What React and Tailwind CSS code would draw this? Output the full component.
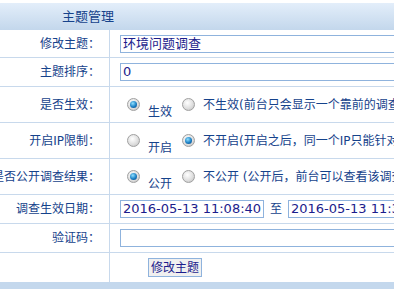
import React from "react";

const labelCls =
  "flex items-center justify-end pr-[9px] whitespace-nowrap text-[12px] text-[#15428b] border-r border-[#c8d9ec]";
const font = { fontFamily: '"DejaVu Sans","Noto Sans CJK SC",sans-serif' };

function Radio({ checked }) {
  return (
    <span className="w-[13px] h-[13px] shrink-0 rounded-full border border-[#a0a0a0] bg-[radial-gradient(circle_at_40%_35%,#ffffff,#dcdcdc_60%,#b8b8b8)] flex items-center justify-center">
      {checked && (
        <span className="w-[7px] h-[7px] rounded-full bg-[radial-gradient(circle_at_40%_35%,#8fe0ff,#1a7fc4_55%,#0a3f78)]" />
      )}
    </span>
  );
}

function RadioRow({ first, second, firstChecked }) {
  return (
    <div className="flex items-center pl-[17px] whitespace-nowrap text-[12px] text-[#15428b]">
      <Radio checked={firstChecked} />
      <span className="pt-[14px] ml-[8px]">{first}</span>
      <span className="ml-[10px] flex items-center">
        <Radio checked={!firstChecked} />
      </span>
      <span className="ml-[8px]">{second}</span>
    </div>
  );
}

function Input({ value, w }) {
  return (
    <div
      className={`h-[18px] border border-[#8fb3dd] bg-white flex items-center pl-[2px] text-[13px] text-[#1c1c8c] whitespace-nowrap overflow-hidden shrink-0 ${w}`}
    >
      {value}
    </div>
  );
}

export default function App() {
  return (
    <div className="w-[394px] h-[303px] bg-white overflow-hidden" style={font}>
      <div className="w-[560px] pt-[3px]">
        <div className="h-[27px] bg-[linear-gradient(to_bottom,#e3eefa,#c3d7ec)] flex items-center pl-[62px] text-[13px] text-[#15428b]">
          主题管理
        </div>
        <div className="grid grid-cols-[110px_1fr]">
          <div className={`${labelCls} h-[28px] border-b`}>修改主题：</div>
          <div className="h-[28px] border-b border-[#c8d9ec] flex items-center pl-[10px]">
            <Input value="环境问题调查" w="w-[440px]" />
          </div>

          <div className={`${labelCls} h-[29px] border-b`}>主题排序：</div>
          <div className="h-[29px] border-b border-[#c8d9ec] flex items-center pl-[10px]">
            <Input value="0" w="w-[440px]" />
          </div>

          <div className={`${labelCls} h-[36px] border-b`}>是否生效：</div>
          <div className="h-[36px] border-b border-[#c8d9ec] flex">
            <RadioRow first="生效" second="不生效(前台只会显示一个靠前的调查)" firstChecked />
          </div>

          <div className={`${labelCls} h-[36px] border-b`}>开启IP限制：</div>
          <div className="h-[36px] border-b border-[#c8d9ec] flex">
            <RadioRow first="开启" second="不开启(开启之后，同一个IP只能针对该调查投票一次)" firstChecked={false} />
          </div>

          <div className={`${labelCls} h-[36px] border-b`}>是否公开调查结果：</div>
          <div className="h-[36px] border-b border-[#c8d9ec] flex">
            <RadioRow first="公开" second="不公开 (公开后，前台可以查看该调查的结果)" firstChecked />
          </div>

          <div className={`${labelCls} h-[29px] border-b`}>调查生效日期：</div>
          <div className="h-[29px] border-b border-[#c8d9ec] flex items-center pl-[10px] text-[12px] text-[#15428b]">
            <Input value="2016-05-13 11:08:40" w="w-[144px]" />
            <span className="mx-[6px]">至</span>
            <Input value="2016-05-13 11:38:40" w="w-[144px]" />
          </div>

          <div className={`${labelCls} h-[29px] border-b`}>验证码：</div>
          <div className="h-[29px] border-b border-[#c8d9ec] flex items-center pl-[10px]">
            <Input value="" w="w-[440px]" />
          </div>

          <div className={`${labelCls} h-[29px]`}></div>
          <div className="h-[29px] flex items-center pl-[38px]">
            <div className="h-[19px] px-[2px] border border-[#8fb3dd] bg-[#f0f0f0] flex items-center text-[12px] text-[#1c1c8c]">
              修改主题
            </div>
          </div>
        </div>
        <div className="h-[7px] bg-[#c4d8ed]" />
      </div>
    </div>
  );
}
